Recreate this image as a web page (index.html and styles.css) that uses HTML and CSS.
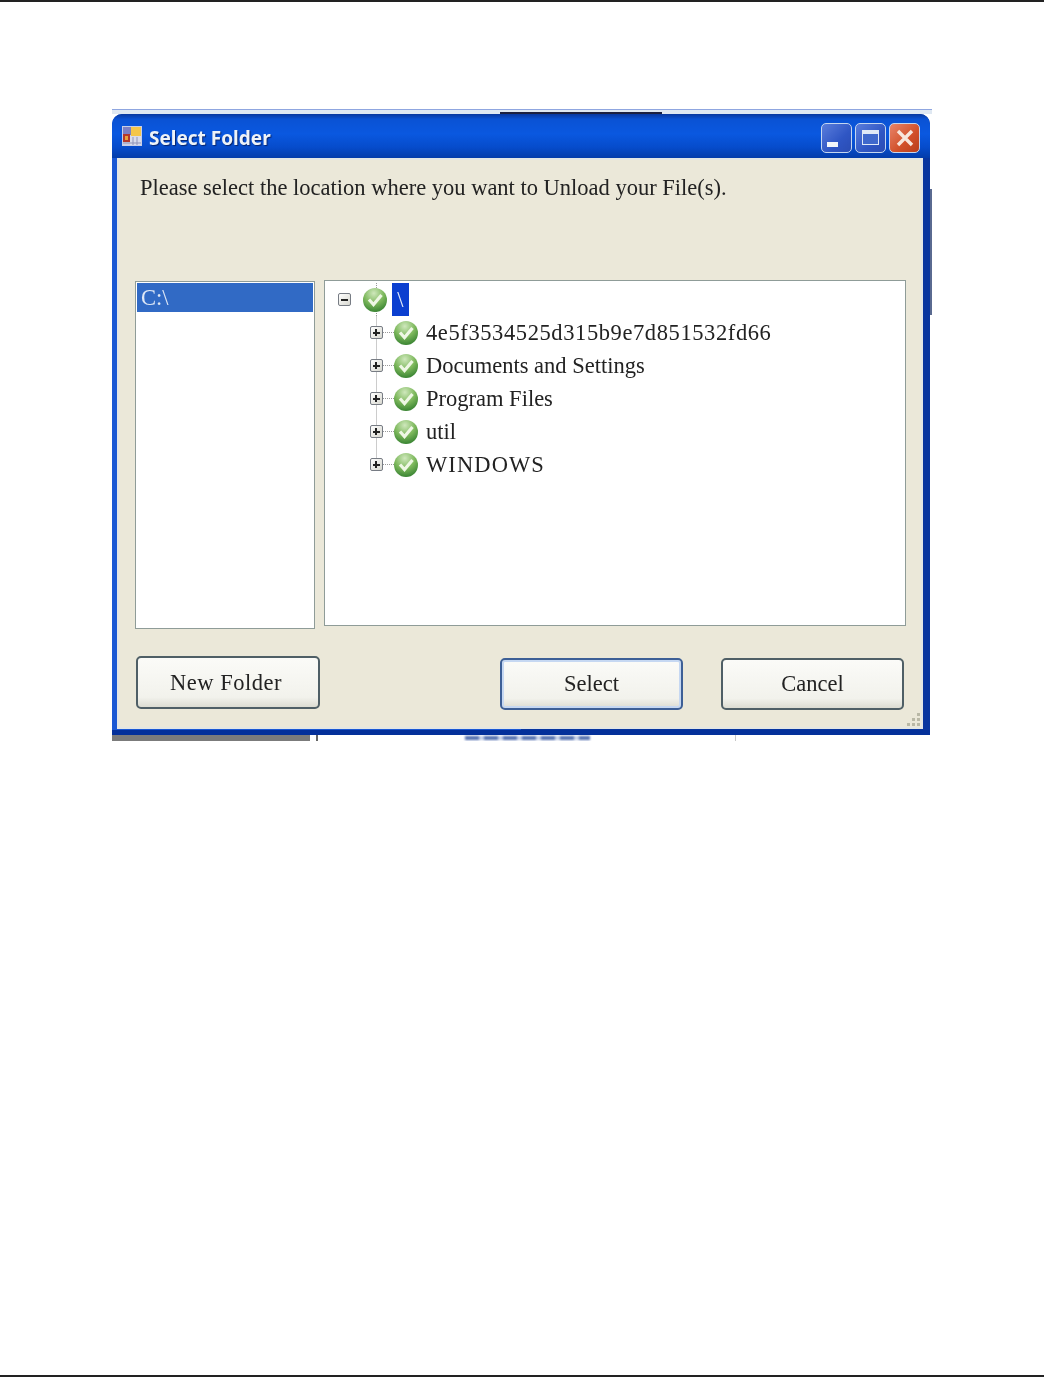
FILE: index.html
```html
<!DOCTYPE html>
<html lang="en">
<head>
  <meta charset="UTF-8" />
  <title>Select Folder</title>
  <link rel="stylesheet" href="styles.css">
</head>
<body>
  <svg class="defs" width="0" height="0">
    <defs>
      <radialGradient id="greenBall" cx="45%" cy="22%" r="85%">
        <stop offset="0" stop-color="#cfe8bc" />
        <stop offset="0.5" stop-color="#7db85c" />
        <stop offset="1" stop-color="#2c7a2a" />
      </radialGradient>
      <symbol id="okIcon" viewBox="0 0 24 24">
        <circle cx="12" cy="12" r="12" fill="url(#greenBall)" />
        <path d="M6 11.5 L10.5 16.5 L18.5 7" fill="none" stroke="#eef7e4" stroke-width="3.2" />
      </symbol>
    </defs>
  </svg>

  <div class="page">
    <div class="shot">
      <div class="behind-top"></div>
      <div class="behind-right"></div>
      <div class="behind-gray"></div>
      <div class="behind-line"></div>
      <div class="behind-smear"></div>
      <div class="behind-rule"></div>

      <div class="window">
        <div class="titlebar">
          <svg class="app-icon" width="22" height="22" viewBox="0 0 22 22">
            <rect x="1" y="1" width="20" height="20" fill="#c9cfe6" />
            <rect x="2" y="2" width="8" height="8" fill="#7d80c4" />
            <rect x="10" y="2" width="10" height="9" fill="#f4c64a" />
            <rect x="2" y="9" width="7" height="8" fill="#b5382c" />
            <rect x="4" y="11" width="3" height="4" fill="#e9a23a" />
            <rect x="9" y="11" width="11" height="9" fill="#d8dcec" />
            <path d="M2 18h18M12 12v8M16 12v8" stroke="#8f94b8" stroke-width="1" />
          </svg>
          <span class="title">Select Folder</span>
          <div class="controls">
            <div class="ctl ctl-min"><span class="min-bar"></span></div>
            <div class="ctl ctl-max"><span class="max-box"></span></div>
            <div class="ctl ctl-close">
              <svg width="20" height="20" viewBox="0 0 20 20">
                <path d="M3 3 L17 17 M17 3 L3 17" stroke="#f7e6dc" stroke-width="3.4" />
              </svg>
            </div>
          </div>
        </div>

        <div class="client">
          <p class="prompt">Please select the location where you want to Unload your File(s).</p>

          <div class="panes">
            <div class="drive-list">
              <div class="drive selected">C:\</div>
            </div>
            <div class="tree">
              <div class="row root">
                <span class="box"><span class="minus"></span></span>
                <span class="root-icon"><svg class="ok" width="24" height="24"><use href="#okIcon" /></svg></span>
                <span class="root-label">\</span>
              </div>
              <div class="row child">
                <span class="stem"><span class="box"><span class="minus"></span><span class="bar"></span></span></span>
                <span class="dash"></span>
                <svg class="ok" width="24" height="24"><use href="#okIcon" /></svg>
                <span class="label hash">4e5f3534525d315b9e7d851532fd66</span>
              </div>
              <div class="row child">
                <span class="stem"><span class="box"><span class="minus"></span><span class="bar"></span></span></span>
                <span class="dash"></span>
                <svg class="ok" width="24" height="24"><use href="#okIcon" /></svg>
                <span class="label">Documents and Settings</span>
              </div>
              <div class="row child">
                <span class="stem"><span class="box"><span class="minus"></span><span class="bar"></span></span></span>
                <span class="dash"></span>
                <svg class="ok" width="24" height="24"><use href="#okIcon" /></svg>
                <span class="label">Program Files</span>
              </div>
              <div class="row child">
                <span class="stem"><span class="box"><span class="minus"></span><span class="bar"></span></span></span>
                <span class="dash"></span>
                <svg class="ok" width="24" height="24"><use href="#okIcon" /></svg>
                <span class="label">util</span>
              </div>
              <div class="row child last">
                <span class="stem"><span class="box"><span class="minus"></span><span class="bar"></span></span></span>
                <span class="dash"></span>
                <svg class="ok" width="24" height="24"><use href="#okIcon" /></svg>
                <span class="label caps">WINDOWS</span>
              </div>
            </div>
          </div>

          <div class="footer">
            <button class="btn btn-new" type="button">New Folder</button>
            <button class="btn btn-select" type="button">Select</button>
            <button class="btn btn-cancel" type="button">Cancel</button>
          </div>

          <svg class="grip" width="18" height="16" viewBox="0 0 18 16">
            <path d="M12 1h3v3h-3zM7 6h3v3H7zM12 6h3v3h-3zM2 11h3v3H2zM7 11h3v3H7zM12 11h3v3h-3z" fill="#b9b8a6" />
          </svg>
        </div>
      </div>
    </div>
  </div>
</body>
</html>
```

FILE: styles.css
```css
body {
  margin: 0;
  background: #fff;
  font-family: "Liberation Serif", serif;
}
.defs {
  display: block;
  height: 0;
}
.page {
  box-sizing: border-box;
  height: 1377px;
  padding: 107px 0 0 112px;
  border-top: 2px solid #222;
  border-bottom: 2px solid #222;
}

/* the screenshot pasted in the document */
.shot {
  position: relative;
  width: 820px;
  height: 632px;
  overflow: hidden;
  background: #fff;
  filter: blur(0.5px);
}
.behind-top {
  position: absolute;
  left: 0;
  top: 0;
  width: 100%;
  height: 5px;
  box-sizing: border-box;
  border-top: 1px solid #8fa6e0;
  background: #dfe8f2;
}
.behind-top::after {
  content: "";
  position: absolute;
  left: 388px;
  top: 2px;
  width: 162px;
  height: 2px;
  background: #1c2140;
}
.behind-right {
  position: absolute;
  right: 0;
  top: 80px;
  width: 2px;
  height: 126px;
  background: #5a6a90;
}
.behind-gray {
  position: absolute;
  left: 0;
  bottom: 0;
  width: 198px;
  height: 6px;
  background: #7b7b7b;
}
.behind-line {
  position: absolute;
  left: 204px;
  bottom: 0;
  width: 2px;
  height: 6px;
  background: #666;
}
.behind-smear {
  position: absolute;
  left: 353px;
  bottom: 1px;
  width: 125px;
  height: 4px;
  background: repeating-linear-gradient(90deg, #5470b0 0 14px, #c4cfe6 14px 19px);
  filter: blur(1.2px);
}
.behind-rule {
  position: absolute;
  left: 623px;
  bottom: 0;
  width: 1px;
  height: 6px;
  background: #c8c8c8;
}

.window {
  position: relative;
  display: flex;
  flex-direction: column;
  box-sizing: border-box;
  width: 818px;
  height: 621px;
  margin-top: 5px;
  padding: 0 7px 1px 5px;
  border-radius: 10px 10px 0 0;
  background: linear-gradient(90deg, #1a58d4 50%, #08359f 50%);
  border-bottom: 5px solid #04309a;
}
.titlebar {
  display: flex;
  align-items: center;
  flex: none;
  height: 44px;
  margin: 0 -7px 0 -5px;
  padding: 0 10px 0 9px;
  border-radius: 10px 10px 0 0;
  background: linear-gradient(#08389f 0, #0a52d4 12%, #0a58e0 45%, #064ccc 75%, #033caa 100%);
}
.app-icon {
  flex: none;
}
.title {
  margin: 4px 0 0 6px;
  font: bold 19px "Noto Sans", sans-serif;
  color: #eef3f8;
  text-shadow: 1px 1px 1px #06246e;
}
.controls {
  display: flex;
  gap: 3px;
  margin-left: auto;
  margin-top: 3px;
}
.ctl {
  display: flex;
  align-items: center;
  justify-content: center;
  box-sizing: border-box;
  width: 31px;
  height: 30px;
  border: 1.5px solid #c4d6f0;
  border-radius: 5px;
  background: linear-gradient(135deg, #5a7ddc, #2f56c4 60%, #2a4cb4);
}
.ctl-close {
  background: linear-gradient(135deg, #e8846a, #d14f28 60%, #b83e1c);
}
.min-bar {
  width: 11px;
  height: 5px;
  margin: 13px 9px 0 0;
  background: #f2f6fa;
}
.max-box {
  box-sizing: border-box;
  width: 17px;
  height: 15px;
  border: 1.5px solid #dfe8f6;
  border-top-width: 4px;
  background: #3f68cc;
}

.client {
  position: relative;
  flex: 1;
  box-sizing: border-box;
  padding: 18px 0 0 18px;
  background: #ebe8d9;
  box-shadow: inset 0 0 0 2px #e3e6e4;
}
.prompt {
  margin: 0 0 80px 5px;
  font-size: 22.5px;
  line-height: 24px;
  color: #222;
}
.panes {
  display: flex;
  align-items: flex-start;
  gap: 9px;
  height: 349px;
}
.drive-list {
  box-sizing: border-box;
  width: 180px;
  height: 348px;
  margin-top: 1px;
  padding: 1px;
  background: #fff;
  border: 1px solid #8f9c98;
}
.drive {
  height: 29px;
  padding-left: 4px;
  font-size: 22.5px;
  line-height: 29px;
}
.drive.selected {
  background: #316ac5;
  color: #dfe8f6;
}
.tree {
  box-sizing: border-box;
  width: 582px;
  height: 346px;
  padding-top: 2px;
  background: #fff;
  border: 1px solid #8f9c98;
  font-size: 22.5px;
  color: #222;
}
.row {
  display: flex;
  align-items: center;
  height: 33px;
}
.root .box {
  margin-left: 13px;
}
.root-icon {
  display: flex;
  align-items: center;
  height: 33px;
  margin-left: 12px;
  background: linear-gradient(#999 50%, transparent 50%) 12.5px 0 / 1px 2px repeat-y;
}
.root-label {
  width: 17px;
  height: 33px;
  margin-left: 5px;
  line-height: 33px;
  text-align: center;
  background: #0b3fd0;
  color: #e8eefa;
}
.box {
  position: relative;
  display: flex;
  align-items: center;
  justify-content: center;
  box-sizing: border-box;
  width: 13px;
  height: 13px;
  border: 1px solid #777c84;
  border-radius: 2px;
  background: linear-gradient(135deg, #fff, #d8d8d0);
}
.minus {
  width: 7px;
  height: 2px;
  background: #222;
}
.bar {
  position: absolute;
  left: 4px;
  top: 2px;
  width: 2px;
  height: 7px;
  background: #222;
}
.child {
  padding-left: 44px;
}
.stem {
  display: flex;
  align-items: center;
  justify-content: center;
  width: 14px;
  height: 33px;
  background: linear-gradient(#999 50%, transparent 50%) center / 1px 2px repeat-y;
}
.last .stem {
  background: linear-gradient(transparent 50%, #fff 50%), linear-gradient(#999 50%, transparent 50%) center / 1px 2px repeat-y;
}
.dash {
  width: 11px;
  height: 1px;
  background: linear-gradient(90deg, #999 50%, transparent 50%) 0 0 / 2px 1px repeat-x;
}
.ok {
  flex: none;
}
.label {
  margin-left: 8px;
}
.hash {
  letter-spacing: 0.6px;
}
.caps {
  letter-spacing: 1.1px;
}

.footer {
  display: flex;
  align-items: flex-start;
  margin: 27px 19px 0 1px;
}
.btn {
  box-sizing: border-box;
  width: 183px;
  height: 52px;
  padding: 0;
  font-family: "Liberation Serif", serif;
  font-size: 22.5px;
  color: #222;
  border: 2px solid #4f5f66;
  border-radius: 5px;
  background: linear-gradient(#fbfbf8, #f2f2ec 80%, #dcdcd2);
}
.btn-new {
  width: 184px;
  height: 53px;
  padding-right: 4px;
  letter-spacing: 0.5px;
}
.btn-select {
  margin: 2px 0 0 auto;
  border-color: #3d5f96;
  box-shadow: inset 0 0 0 2px #c6d8f2;
}
.btn-cancel {
  margin: 2px 0 0 38px;
}
.grip {
  position: absolute;
  right: 0;
  bottom: 1px;
}
```
